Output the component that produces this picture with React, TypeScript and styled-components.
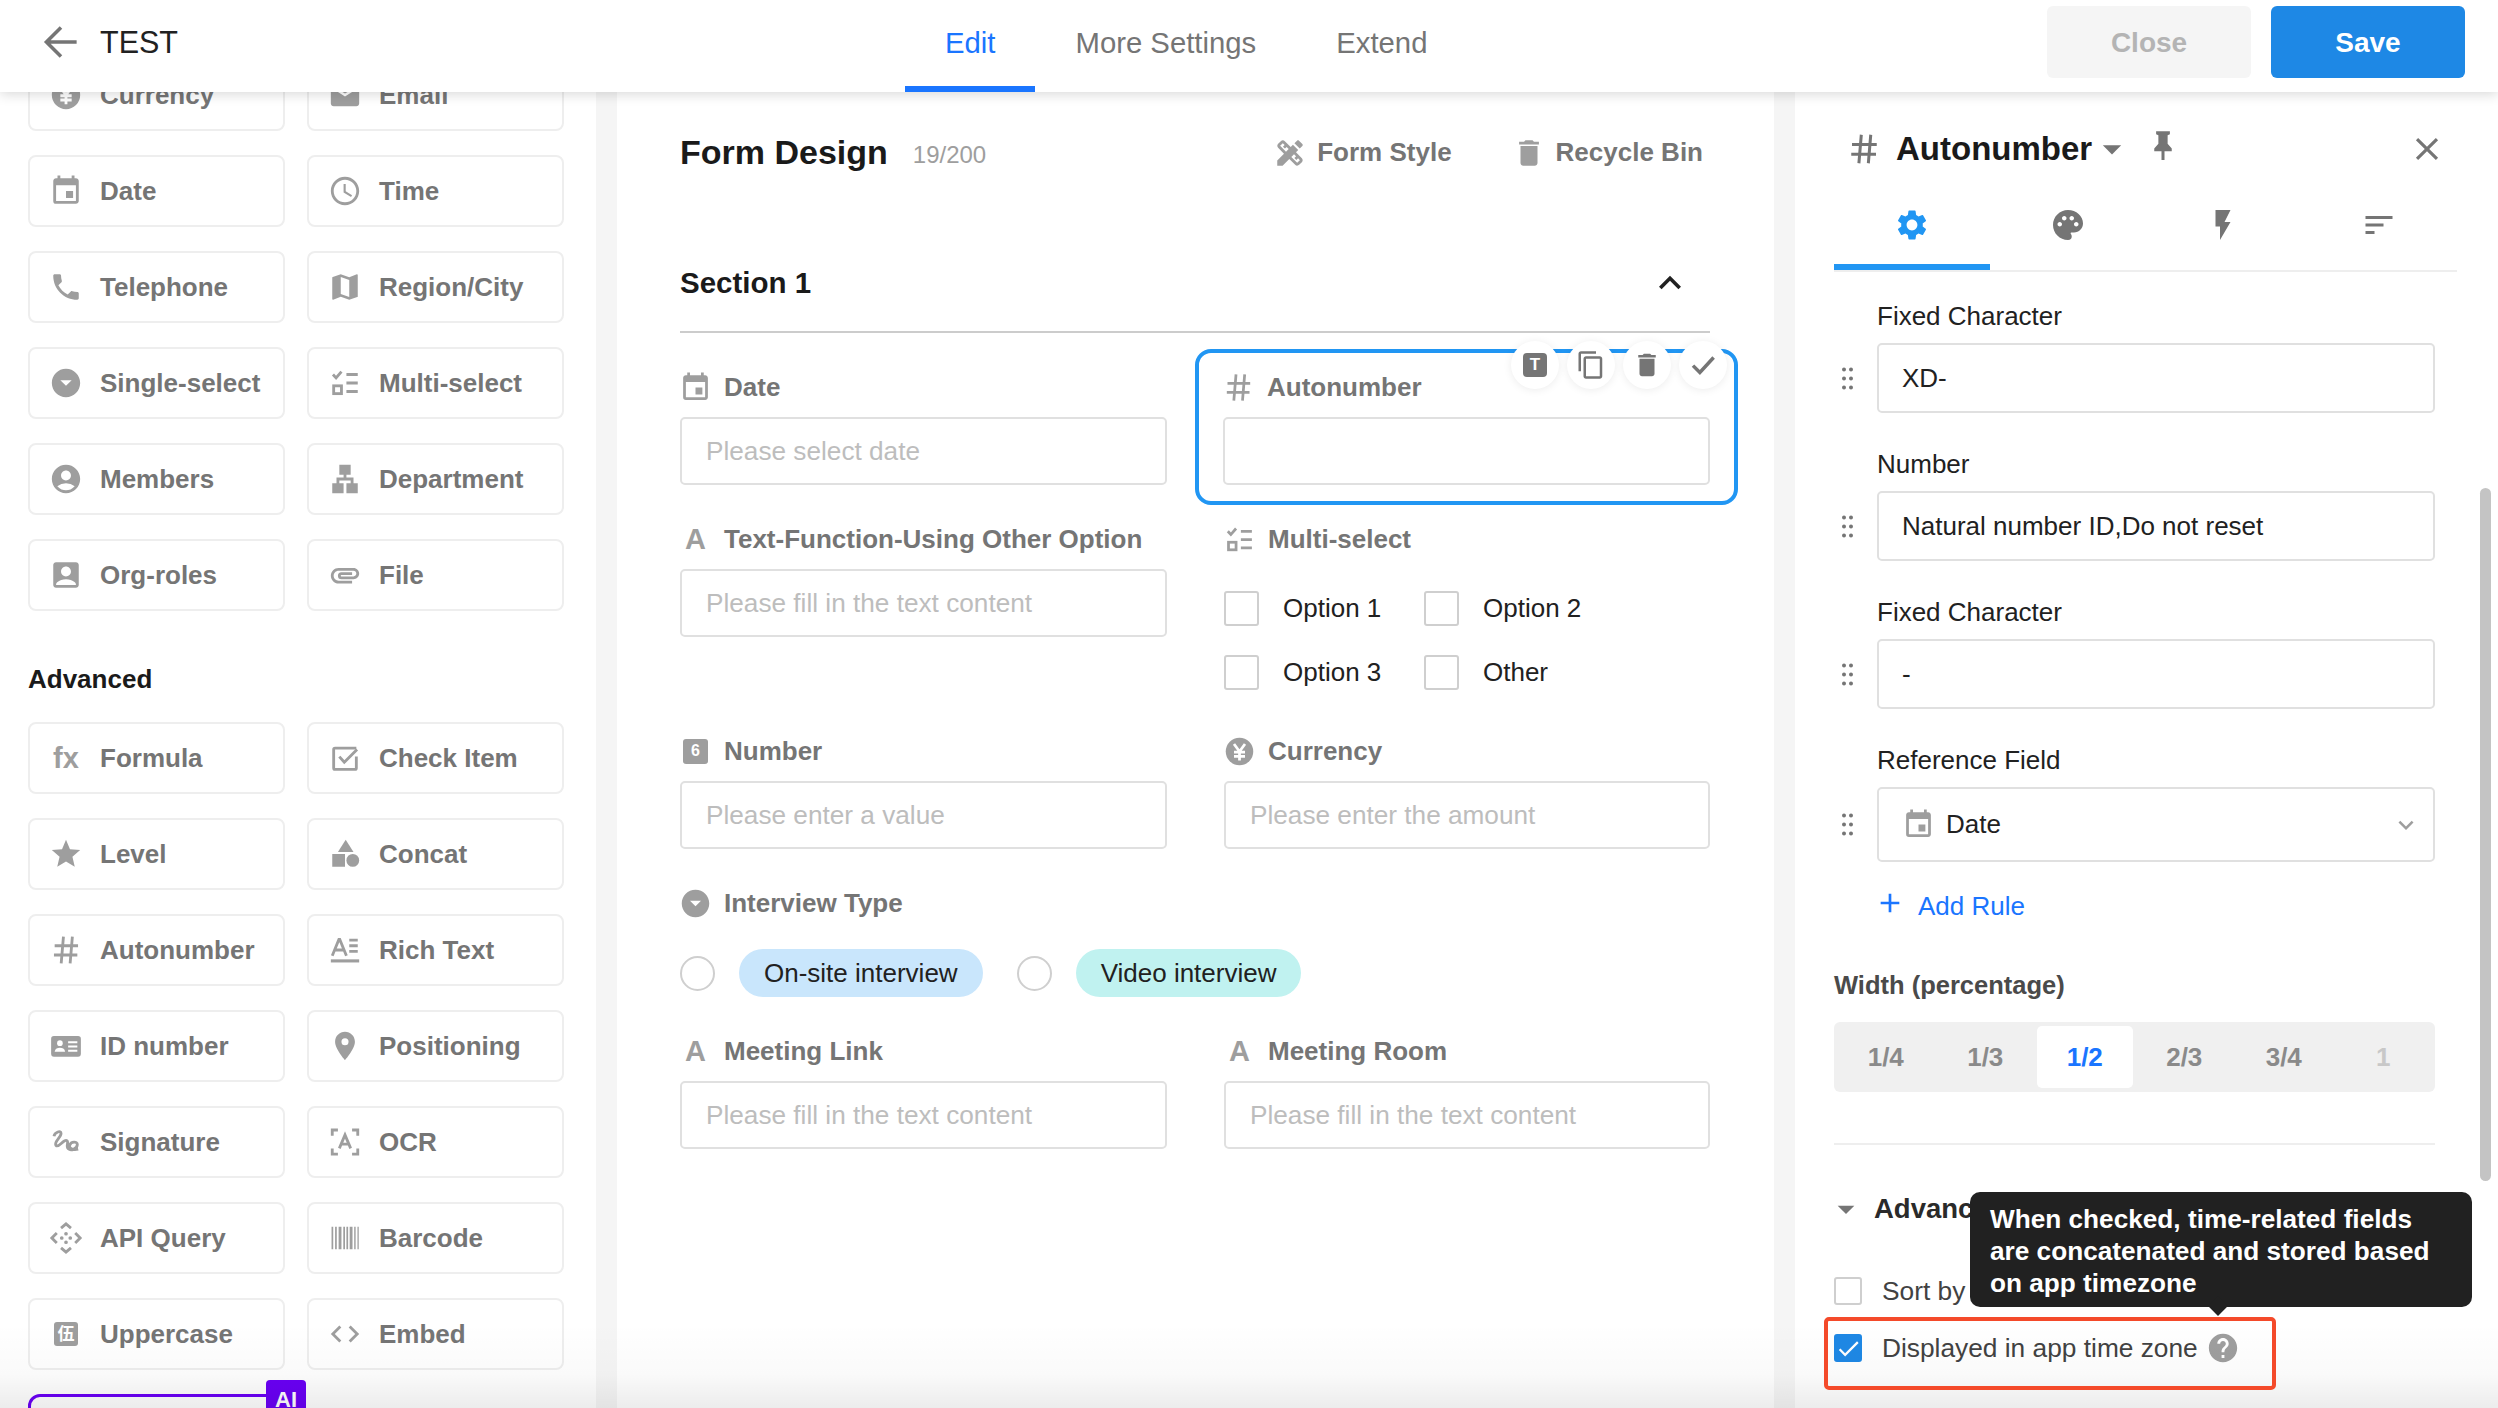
import React from 'react';
import styled, { createGlobalStyle } from 'styled-components';
import {
  MdEvent, MdAccessTime, MdLocalPhone, MdMap, MdArrowDropDownCircle, MdAccountCircle, MdLan, MdAccountBox,
  MdAttachment, MdEmail, MdStar, MdLocationOn, MdCode, MdDesignServices, MdDelete, MdExpandLess,
  MdContentCopy, MdCheck, MdSettings, MdPalette, MdFlashOn, MdSort, MdClose, MdArrowDropDown, MdHelp, MdAdd,
  MdExpandMore,
} from 'react-icons/md';

const Global = createGlobalStyle`
  html, body { margin: 0; padding: 0; background: #fff; }
  body { font-family: "Liberation Sans", Arial, sans-serif; }
  * { box-sizing: border-box; }
`;

const Page = styled.div`
  width: 2498px; height: 1408px; overflow: hidden; display: flex; flex-direction: column; position: relative; background: #f5f5f5;
`;
const Header = styled.header`
  flex: 0 0 92px; height: 92px; display: flex; align-items: stretch; background: #fff; position: relative; z-index: 3;
  box-shadow: 0 2px 12px rgba(0,0,0,.16);
`;
const HeaderLeft = styled.div`
  flex: 0 0 905px; display: flex; align-items: center; padding: 0 0 8px 36px; gap: 14px; color: #212121; font-size: 30.500px;
`;
const BackGlyph = styled.svg.attrs({ viewBox: '0 0 24 24' })`
  width: 50px; height: 50px; fill: none; stroke: #757575; stroke-width: 1.700;
`;
const HeaderTabs = styled.nav` display: flex; flex: 1; `;
const HeaderTab = styled.div<{ $active?: boolean }>`
  padding: 0 40px 7px; display: flex; align-items: center; font-size: 29.300px; height: 92px;
  color: ${p => (p.$active ? '#1a75ff' : '#757575')};
  border-bottom: 6px solid ${p => (p.$active ? '#1a75ff' : 'transparent')};
  padding-top: 6px;
`;
const HeaderActions = styled.div` display: flex; gap: 20px; padding: 6px 33px 0 0; `;
const HeaderButton = styled.div<{ $primary?: boolean }>`
  width: ${p => (p.$primary ? 194 : 204)}px; height: 72px; border-radius: 6px; display: flex; align-items: center; justify-content: center;
  font-size: 28px; font-weight: 700; padding-top: 2px;
  background: ${p => (p.$primary ? '#1e88e5' : '#f5f5f5')}; color: ${p => (p.$primary ? '#fff' : '#b4b4b4')};
`;

const Body = styled.main` flex: 1; display: flex; min-height: 0; position: relative; `;
const BottomFade = styled.div`
  position: absolute; left: 0; right: 0; bottom: 0; height: 85px; z-index: 1; pointer-events: none;
  background: linear-gradient(to bottom, rgba(0,0,0,0), rgba(0,0,0,.02) 60%, rgba(0,0,0,.075));
`;

const Palette = styled.aside` flex: 0 0 596px; background: #fff; overflow: hidden; padding: 0 0 0 28px; `;
const PaletteGrid = styled.div<{ $scrolled?: boolean }>`
  display: grid; grid-template-columns: 257px 257px; column-gap: 22px; row-gap: 24px; grid-auto-rows: 72px;
  margin-top: ${p => (p.$scrolled ? '-33px' : '0')};
`;
const PaletteItem = styled.div`
  border: 2px solid #eeeeee; border-radius: 8px; background: #fff; display: flex; align-items: center;
  padding: 0 0 0 19px; gap: 17px; font-size: 26px; font-weight: 700; color: #757575; white-space: nowrap;
`;
const PaletteHeading = styled.h3`
  margin: 0; padding: 53px 0 28px; height: 111px; line-height: 30px; font-size: 26px; font-weight: 700; color: #1a1a1a;
`;
const AiCard = styled.div`
  position: relative; border: 3px solid #6a00f5; border-radius: 12px 12px 0 0; background: #fff; height: 72px; width: 257px;
`;
const AiBadge = styled.span`
  position: absolute; top: -17px; right: -24px; width: 40px; height: 40px; background: #6a00f5; color: #fff;
  font-size: 22px; font-weight: 700; border-radius: 4px; display: flex; align-items: center; justify-content: center;
`;

const Slot = styled.span<{ $size: number; $dark?: boolean }>`
  flex: 0 0 ${p => p.$size}px; width: ${p => p.$size}px; height: ${p => p.$size}px; display: inline-flex; align-items: center; justify-content: center;
  color: ${p => (p.$dark ? '#757575' : '#9e9e9e')};
  svg { width: 100%; height: 100%; display: block; }
`;
const Stroke = styled.svg.attrs({ viewBox: '0 0 24 24' })`
  fill: none; stroke: currentColor; stroke-width: 2;
`;
const Solid = styled.svg.attrs({ viewBox: '0 0 24 24' })` fill: currentColor; `;
const LetterIcon = styled.span` font-size: 29px; font-weight: 700; color: #9e9e9e; line-height: 1; `;
const FxIcon = styled.span` font-size: 29px; color: #9e9e9e; line-height: 1; letter-spacing: 0; `;
const SquareIcon = styled.span<{ $w: number; $fs: number }>`
  width: ${p => p.$w}px; height: ${p => p.$w}px; border-radius: 3px; background: #9e9e9e; color: #fff; display: flex; align-items: center; justify-content: center;
  font-size: ${p => p.$fs}px; font-weight: 700; line-height: 1;
  font-family: "Liberation Sans", "Noto Sans CJK SC", sans-serif;
`;

const Hash = () => (
  <Stroke strokeWidth="2.600"><path d="M10.200 2.500L8.600 21.500M16.500 2.500L14.900 21.500M4 9h16.500M3.500 15.500h16.500" /></Stroke>
);
const YenCircle = () => (
  <Solid><circle cx="12" cy="12" r="10" /><path d="M8 6.500l4 5.500 4-5.500M12 12v6.500M8 12.500h8M8 15.500h8" fill="none" stroke="#fff" strokeWidth="2" /></Solid>
);
const MultiSelect = () => (
  <Stroke strokeWidth="1.700"><path d="M3.500 6l2.200 2.400L9.500 4M13 6h8M13 12h8M13 18h8" /><rect x="4" y="14" width="5.500" height="5.500" /></Stroke>
);
const CheckItem = () => (
  <Stroke strokeWidth="1.800"><path d="M20 5H5a1 1 0 0 0-1 1v13a1 1 0 0 0 1 1h14a1 1 0 0 0 1-1v-8" /><path d="M8 11l3.500 4L20.500 6" /></Stroke>
);
const Concat = () => (
  <Solid><path d="M12.500 2l5.500 8.500H7z" /><rect x="3" y="12" width="9" height="9" /><circle cx="17.500" cy="16.500" r="4.500" /></Solid>
);
const RichText = () => (
  <Stroke strokeWidth="1.600"><path d="M3 16L7.700 4.500h.6L13 16M5 12h6M15 5h6M15 9h6M15 13h6" /><path d="M2 19.700h20" strokeWidth="2.200" /></Stroke>
);
const IdCard = () => (
  <Solid><rect x="1.500" y="5" width="21" height="14.500" rx="2" /><circle cx="7.700" cy="10" r="2" fill="#fff" /><path d="M4 16c.3-2 2-2.700 3.700-2.700s3.400.7 3.700 2.700z" fill="#fff" /><path d="M13.500 9.300h6.500M13.500 12.300h6.500M13.500 15.300h6.500" stroke="#fff" strokeWidth="1.400" /></Solid>
);
const Signature = () => (
  <Stroke strokeWidth="2.200"><path d="M3.500 8c.6-3 5-4.500 5-2 0 2.800-5.500 6-3.500 8.500 1.900 2 5.500-5 7.600-3.500 1.700 1.200-1 4 1 5.800 2 1.800 6.400-.2 6.400-3 0-2.400-4.400-2.200-5.400.4-.8 2 2 3.800 6 2.800" /></Stroke>
);
const Ocr = () => (
  <Stroke strokeWidth="1.700"><path d="M3 7.500V3.500h4M17 3.500h4v4M21 16.500v4h-4M7 20.500H3v-4M8 16.500l4-9.500 4 9.500M9.300 13.500h5.400" /></Stroke>
);
const ApiQuery = () => (
  <Stroke strokeWidth="2.200"><path d="M5.500 8.500L2 12l3.500 3.500M18.500 8.500L22 12l-3.500 3.500M8.500 5L12 2l3.500 3M8.500 19l3.500 3 3.500-3" /><path d="M9 12h.01M15 12h.01M12 9h.01M12 15h.01" strokeWidth="2.600" strokeLinecap="round" /></Stroke>
);
const Barcode = () => (
  <Solid><path d="M2.500 4h1.200v16H2.500zM5 4h1.200v16H5zM7.500 4h2v16h-2zM10.800 4h1.200v16h-1.200zM13 4h1.200v16H13zM15.300 4h2v16h-2zM18.500 4h1v16h-1zM20.800 4h.9v16h-.9z" /></Solid>
);
const Pin = () => (
  <Solid><path d="M6.500 1h11v2.400l-1.800.8V11l3.300 3.800V17h-5.800v7h-2.400v-7H5v-2.200L8.300 11V4.200l-1.800-.8z" /></Solid>
);
const DragDots = () => (
  <svg viewBox="0 0 11 23" fill="#757575"><circle cx="2" cy="2.500" r="2" /><circle cx="9" cy="2.500" r="2" /><circle cx="2" cy="11.500" r="2" /><circle cx="9" cy="11.500" r="2" /><circle cx="2" cy="20.500" r="2" /><circle cx="9" cy="20.500" r="2" /></svg>
);

const commonItems: [string, React.ReactNode][] = [
  ['Currency', <YenCircle />], ['Email', <MdEmail />],
  ['Date', <MdEvent />], ['Time', <MdAccessTime />],
  ['Telephone', <MdLocalPhone />], ['Region/City', <MdMap />],
  ['Single-select', <MdArrowDropDownCircle />], ['Multi-select', <MultiSelect />],
  ['Members', <MdAccountCircle />], ['Department', <MdLan />],
  ['Org-roles', <MdAccountBox />], ['File', <MdAttachment />],
];
const advancedItems: [string, React.ReactNode][] = [
  ['Formula', <FxIcon>fx</FxIcon>], ['Check Item', <CheckItem />],
  ['Level', <MdStar />], ['Concat', <Concat />],
  ['Autonumber', <Hash />], ['Rich Text', <RichText />],
  ['ID number', <IdCard />], ['Positioning', <MdLocationOn />],
  ['Signature', <Signature />], ['OCR', <Ocr />],
  ['API Query', <ApiQuery />], ['Barcode', <Barcode />],
  ['Uppercase', <SquareIcon $w={24} $fs={17}>伍</SquareIcon>], ['Embed', <MdCode />],
];

const Canvas = styled.section`
  flex: 0 0 1157px; margin: 0 21px; background: #fff; padding: 0 64px 0 63px; overflow: hidden;
`;
const CanvasTop = styled.div` height: 121px; display: flex; align-items: center; `;
const CanvasTitle = styled.h1` margin: 0; font-size: 34px; font-weight: 700; color: #1a1a1a; `;
const CanvasCount = styled.span` margin-left: 25px; font-size: 24px; color: #9e9e9e; padding-top: 4px; `;
const CanvasTools = styled.div` margin-left: auto; display: flex; align-items: center; padding-right: 7px; `;
const CanvasTool = styled.div`
  display: flex; align-items: center; gap: 10px; font-size: 26px; font-weight: 700; color: #757575;
  & + & { margin-left: 60px; }
`;
const SectionHead = styled.div`
  margin-top: 22px; height: 98px; border-bottom: 2px solid #cccccc; display: flex; align-items: center; justify-content: space-between;
  font-size: 29.500px; font-weight: 700; color: #1a1a1a;
  svg { width: 44px; height: 44px; color: #212121; margin-right: 18px; }
`;
const FieldGrid = styled.div`
  margin-top: 16px; display: grid; grid-template-columns: 487px 486px; column-gap: 57px;
`;
const Field = styled.div<{ $head?: number; $tail?: number; $selected?: boolean; $wide?: boolean }>`
  position: relative; padding: ${p => p.$head ?? 19}px 0 ${p => p.$tail ?? 19}px;
  ${p => p.$wide && 'grid-column: 1 / -1;'}
  ${p => p.$selected && `
    margin: 0 -28px -3px -29px; padding: 16px 24px 16px 24px; border: 4px solid #2196f3; border-radius: 16px;
  `}
`;
const FieldLabel = styled.div<{ $flush?: boolean }>`
  height: 36px; display: flex; align-items: center; gap: 12px; margin: 0 0 ${p => (p.$flush ? 0 : 12)}px -1px;
  font-size: 26px; font-weight: 700; color: #757575; white-space: nowrap;
`;
const TextInput = styled.div`
  height: 68px; border: 2px solid #e0e0e0; border-radius: 5px; background: #fff; display: flex; align-items: center;
  padding: 0 0 0 24px; font-size: 26.200px; color: #bdbdbd;
`;
const FieldActions = styled.div` position: absolute; top: -12px; right: 7px; display: flex; gap: 8px; `;
const FieldAction = styled.span`
  width: 48px; height: 48px; border-radius: 50%; background: #fff; box-shadow: 0 1px 8px rgba(0,0,0,.08);
  display: flex; align-items: center; justify-content: center; color: #757575;
  svg { width: 30px; height: 30px; }
`;
const DoneGlyph = styled.svg.attrs({ viewBox: '0 0 24 24' })`
  && { width: 30px; height: 30px; }
  fill: none; stroke: #757575; stroke-width: 2.800;
`;
const TBadge = styled.span`
  width: 24px; height: 24px; border-radius: 4px; background: #757575; color: #fff; font-size: 17px; font-weight: 700;
  display: flex; align-items: center; justify-content: center;
`;
const OptionGrid = styled.div`
  margin-top: 34px; display: grid; grid-template-columns: 200px auto; row-gap: 29px; justify-content: start;
`;
const Option = styled.label` display: flex; align-items: center; gap: 24px; height: 35px; font-size: 26px; color: #212121; `;
const Box = styled.span` width: 35px; height: 35px; border: 2px solid #cfcfcf; border-radius: 3px; background: #fff; `;
const RadioRow = styled.div` display: flex; align-items: center; height: 48px; margin-top: 28px; `;
const Radio = styled.span`
  width: 35px; height: 35px; border: 2px solid #cfcfcf; border-radius: 50%; margin-right: 24px;
  & ~ & { margin-left: 34px; }
`;
const Chip = styled.span<{ $tone: string }>`
  height: 48px; padding: 0 25px; border-radius: 24px; background: ${p => p.$tone}; color: #212121; font-size: 26px; display: flex; align-items: center;
`;

const Inspector = styled.aside`
  flex: 1; background: #fff; padding: 0 63px 0 39px; position: relative; overflow: hidden;
`;
const InspectorHead = styled.div`
  height: 112px; padding-top: 2px; display: flex; align-items: center; color: #1a1a1a; font-size: 33px; font-weight: 700; position: relative;
`;
const InspectorTitle = styled.span` margin-left: 14px; `;
const InspectorClose = styled.span`
  margin-left: auto; margin-right: -11px; width: 38px; height: 38px; color: #757575; display: flex;
  svg { width: 100%; height: 100%; }
`;
const InspectorTabs = styled.div`
  display: grid; grid-template-columns: repeat(4, 1fr); margin-right: -22px; height: 68px; border-bottom: 2px solid #eeeeee;
`;
const InspectorTab = styled.div<{ $active?: boolean }>`
  height: 66px; display: flex; justify-content: center; padding-top: 3px;
  color: ${p => (p.$active ? '#2196f3' : '#757575')};
  border-bottom: 6px solid ${p => (p.$active ? '#2196f3' : 'transparent')};
  svg { width: 36px; height: 36px; }
`;
const Rules = styled.div` margin-top: 26px; display: flex; flex-direction: column; gap: 33px; `;
const RuleLabel = styled.div` height: 36px; line-height: 36px; margin: 0 0 9px 43px; font-size: 26px; color: #212121; `;
const RuleRow = styled.div` display: flex; align-items: center; `;
const Handle = styled.span`
  flex: 0 0 43px; padding-left: 8px; display: flex;
  svg { width: 11px; height: 23px; }
`;
const RuleInput = styled.div<{ $tall?: boolean }>`
  flex: 1; height: ${p => (p.$tall ? 75 : 70)}px; border: 2px solid #e0e0e0; border-radius: 5px; display: flex; align-items: center;
  padding-left: 23px; font-size: 26px; color: #212121; gap: 11px; padding-right: 12px;
`;
const RuleChevron = styled.span`
  margin-left: auto; width: 30px; height: 30px; color: #9e9e9e; display: flex;
  svg { width: 100%; height: 100%; }
`;
const AddRule = styled.div`
  margin: 24px 0 0 44px; height: 40px; display: flex; align-items: center; gap: 12px; font-size: 26px; color: #1a75ff;
  svg { width: 32px; height: 32px; margin-top: -6px; margin-left: -4px; }
`;
const SubHeading = styled.div` margin-top: 41px; height: 36px; line-height: 36px; font-size: 25.500px; font-weight: 700; color: #4a4a4a; `;
const Segments = styled.div`
  margin-top: 19px; height: 70px; background: #f0f0f0; border-radius: 6px; padding: 4px; display: grid; grid-template-columns: repeat(6, 1fr); gap: 4px;
`;
const Segment = styled.div<{ $active?: boolean; $off?: boolean }>`
  border-radius: 5px; display: flex; align-items: center; justify-content: center; font-size: 26px; font-weight: 700;
  background: ${p => (p.$active ? '#fff' : 'transparent')};
  color: ${p => (p.$active ? '#1a75ff' : p.$off ? '#c8c8c8' : '#8a8a8a')};
`;
const Divider = styled.div` margin-top: 51px; height: 2px; background: #eeeeee; `;
const AdvancedHead = styled.div`
  margin-top: 46px; height: 36px; display: flex; align-items: center; gap: 8px; font-size: 27.500px; font-weight: 700; color: #2a2a2a;
  svg { width: 40px; height: 40px; margin-left: -8px; color: #757575; }
`;
const CheckRow = styled.div<{ $top: number }>`
  margin-top: ${p => p.$top}px; height: 36px; display: flex; align-items: center; gap: 20px; font-size: 26.300px; color: #424242;
`;
const Check = styled.span<{ $on?: boolean }>`
  width: 28px; height: 28px; border-radius: 3px; display: flex; align-items: center; justify-content: center; color: #fff;
  background: ${p => (p.$on ? '#1e88e5' : '#fff')}; border: 2px solid ${p => (p.$on ? '#1e88e5' : '#cfcfcf')};
  svg { width: 27px; height: 27px; flex: none; }
`;
const HelpMark = styled.span`
  width: 34px; height: 34px; color: #9e9e9e; margin-left: -12px; display: flex;
  svg { width: 100%; height: 100%; }
`;
const RedFrame = styled.div`
  position: absolute; left: 29px; top: 1225px; width: 452px; height: 73px; border: 4px solid #f44a2a; border-radius: 5px; z-index: 2; pointer-events: none;
`;
const Tooltip = styled.div`
  position: absolute; left: 175px; top: 1100px; width: 502px; height: 115px; background: #212121; border-radius: 10px; z-index: 4;
  padding: 11px 24px 0 20px; color: #fff; font-size: 26.200px; font-weight: 700; line-height: 32px;
  &::after {
    content: ''; position: absolute; left: 241px; bottom: -6px; width: 14px; height: 14px; background: #212121; transform: rotate(45deg);
  }
`;
const ScrollThumb = styled.div`
  position: absolute; left: 685px; top: 396px; width: 11px; height: 693px; border-radius: 6px; background: #c4c4c4; z-index: 2;
`;

export default function App() {
  return (
    <Page>
      <Global />
      <Header>
        <HeaderLeft>
          <BackGlyph><path d="M19.500 12H5M12 5l-7 7 7 7" /></BackGlyph>
          <span>TEST</span>
        </HeaderLeft>
        <HeaderTabs>
          <HeaderTab $active>Edit</HeaderTab>
          <HeaderTab>More Settings</HeaderTab>
          <HeaderTab>Extend</HeaderTab>
        </HeaderTabs>
        <HeaderActions>
          <HeaderButton>Close</HeaderButton>
          <HeaderButton $primary>Save</HeaderButton>
        </HeaderActions>
      </Header>
      <Body>
        <BottomFade />
        <Palette>
          <PaletteGrid $scrolled>
            {commonItems.map(([name, icon]) => (
              <PaletteItem key={name}><Slot $size={34}>{icon}</Slot>{name}</PaletteItem>
            ))}
          </PaletteGrid>
          <PaletteHeading>Advanced</PaletteHeading>
          <PaletteGrid>
            {advancedItems.map(([name, icon]) => (
              <PaletteItem key={name}><Slot $size={34}>{icon}</Slot>{name}</PaletteItem>
            ))}
            <AiCard><AiBadge>AI</AiBadge></AiCard>
          </PaletteGrid>
        </Palette>

        <Canvas>
          <CanvasTop>
            <CanvasTitle>Form Design</CanvasTitle>
            <CanvasCount>19/200</CanvasCount>
            <CanvasTools>
              <CanvasTool><Slot $size={34}><MdDesignServices /></Slot>Form Style</CanvasTool>
              <CanvasTool><Slot $size={34}><MdDelete /></Slot>Recycle Bin</CanvasTool>
            </CanvasTools>
          </CanvasTop>
          <SectionHead>Section 1<MdExpandLess /></SectionHead>
          <FieldGrid>
            <Field $head={20} $tail={17}>
              <FieldLabel><Slot $size={33}><MdEvent /></Slot>Date</FieldLabel>
              <TextInput>Please select date</TextInput>
            </Field>
            <Field $selected>
              <FieldLabel><Slot $size={33}><Hash /></Slot>Autonumber</FieldLabel>
              <TextInput />
              <FieldActions>
                <FieldAction><TBadge>T</TBadge></FieldAction>
                <FieldAction><MdContentCopy /></FieldAction>
                <FieldAction><MdDelete /></FieldAction>
                <FieldAction><DoneGlyph><path d="M4 12.500l5.500 5.500L20.500 6" /></DoneGlyph></FieldAction>
              </FieldActions>
            </Field>
            <Field $tail={77}>
              <FieldLabel><Slot $size={33}><LetterIcon>A</LetterIcon></Slot>Text-Function-Using Other Option</FieldLabel>
              <TextInput>Please fill in the text content</TextInput>
            </Field>
            <Field $tail={23}>
              <FieldLabel $flush><Slot $size={33}><MultiSelect /></Slot>Multi-select</FieldLabel>
              <OptionGrid>
                <Option><Box />Option 1</Option>
                <Option><Box />Option 2</Option>
                <Option><Box />Option 3</Option>
                <Option><Box />Other</Option>
              </OptionGrid>
            </Field>
            <Field $tail={17}>
              <FieldLabel><Slot $size={33}><SquareIcon $w={25} $fs={16}>6</SquareIcon></Slot>Number</FieldLabel>
              <TextInput>Please enter a value</TextInput>
            </Field>
            <Field $tail={17}>
              <FieldLabel><Slot $size={33}><YenCircle /></Slot>Currency</FieldLabel>
              <TextInput>Please enter the amount</TextInput>
            </Field>
            <Field $wide $tail={17}>
              <FieldLabel $flush><Slot $size={33}><MdArrowDropDownCircle /></Slot>Interview Type</FieldLabel>
              <RadioRow>
                <Radio /><Chip $tone="#c9e6fc">On-site interview</Chip>
                <Radio /><Chip $tone="#c0f2f0">Video interview</Chip>
              </RadioRow>
            </Field>
            <Field>
              <FieldLabel><Slot $size={33}><LetterIcon>A</LetterIcon></Slot>Meeting Link</FieldLabel>
              <TextInput>Please fill in the text content</TextInput>
            </Field>
            <Field>
              <FieldLabel><Slot $size={33}><LetterIcon>A</LetterIcon></Slot>Meeting Room</FieldLabel>
              <TextInput>Please fill in the text content</TextInput>
            </Field>
          </FieldGrid>
        </Canvas>

        <Inspector>
          <InspectorHead>
            <Slot $size={36} $dark style={{ marginLeft: 12 }}><Hash /></Slot>
            <InspectorTitle>Autonumber</InspectorTitle>
            <Slot $size={44} $dark style={{ marginLeft: -2 }}><MdArrowDropDown /></Slot>
            <Slot $size={30} $dark style={{ marginLeft: 14, marginTop: -8 }}><Pin /></Slot>
            <InspectorClose><MdClose /></InspectorClose>
          </InspectorHead>
          <InspectorTabs>
            <InspectorTab $active><MdSettings /></InspectorTab>
            <InspectorTab><MdPalette /></InspectorTab>
            <InspectorTab><MdFlashOn /></InspectorTab>
            <InspectorTab><MdSort /></InspectorTab>
          </InspectorTabs>
          <Rules>
            <div>
              <RuleLabel>Fixed Character</RuleLabel>
              <RuleRow><Handle><DragDots /></Handle><RuleInput>XD-</RuleInput></RuleRow>
            </div>
            <div>
              <RuleLabel>Number</RuleLabel>
              <RuleRow><Handle><DragDots /></Handle><RuleInput>Natural number ID,Do not reset</RuleInput></RuleRow>
            </div>
            <div>
              <RuleLabel>Fixed Character</RuleLabel>
              <RuleRow><Handle><DragDots /></Handle><RuleInput>-</RuleInput></RuleRow>
            </div>
            <div>
              <RuleLabel>Reference Field</RuleLabel>
              <RuleRow>
                <Handle><DragDots /></Handle>
                <RuleInput $tall>
                  <Slot $size={33}><MdEvent /></Slot>Date
                  <RuleChevron><MdExpandMore /></RuleChevron>
                </RuleInput>
              </RuleRow>
            </div>
          </Rules>
          <AddRule><MdAdd />Add Rule</AddRule>
          <SubHeading>Width (percentage)</SubHeading>
          <Segments>
            <Segment>1/4</Segment>
            <Segment>1/3</Segment>
            <Segment $active>1/2</Segment>
            <Segment>2/3</Segment>
            <Segment>3/4</Segment>
            <Segment $off>1</Segment>
          </Segments>
          <Divider />
          <AdvancedHead><MdArrowDropDown />Advanced</AdvancedHead>
          <CheckRow $top={46}><Check />Sort by</CheckRow>
          <CheckRow $top={21}><Check $on><MdCheck /></Check>Displayed in app time zone<HelpMark><MdHelp /></HelpMark></CheckRow>
          <RedFrame />
          <Tooltip>When checked, time-related fields are concatenated and stored based on app timezone</Tooltip>
          <ScrollThumb />
        </Inspector>
      </Body>
    </Page>
  );
}
